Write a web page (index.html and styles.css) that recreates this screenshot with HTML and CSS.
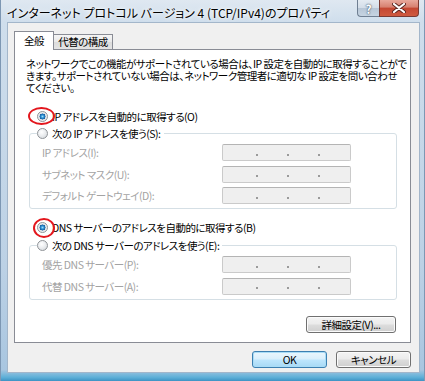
FILE: index.html
```html
<!DOCTYPE html>
<html lang="ja">
<head>
  <meta charset="UTF-8" />
  <title>インターネット プロトコル バージョン 4 (TCP/IPv4)のプロパティ</title>
  <link rel="stylesheet" href="styles.css">
</head>
<body>
  <div class="window">
    <div class="titlebar">
      <span class="title">インターネット プロトコル バージョン 4 (TCP/IPv4)のプロパティ</span>
      <div class="caption-buttons">
        <span class="cap-btn help">?</span>
        <span class="cap-btn close">
          <svg width="14" height="10" viewBox="0 0 14 10">
            <path d="M2 1 L12 9 M12 1 L2 9" stroke="#5a2620" stroke-width="4" stroke-linecap="round"/>
            <path d="M2 1 L12 9 M12 1 L2 9" stroke="#fff" stroke-width="2.2" stroke-linecap="round"/>
          </svg>
        </span>
      </div>
    </div>

    <div class="client">
      <div class="tabs">
        <span class="tab active">全般</span>
        <span class="tab">代替の構成</span>
      </div>

      <div class="panel">
        <p class="desc">ネットワークでこの機能がサポートされている場合は、IP 設定を自動的に取得することがで<br>きます。サポートされていない場合は、ネットワーク管理者に適切な IP 設定を問い合わせ<br>てください。</p>

        <div class="radio-row">
          <span class="radio checked"></span>
          <span>IP アドレスを自動的に取得する(O)</span>
          <span class="mark mark-ip"></span>
        </div>
        <fieldset class="group">
          <legend><span class="radio"></span>次の IP アドレスを使う(S):</legend>
          <div class="fields">
            <span class="label">IP アドレス(I):</span>
            <span class="ip-box"><i></i><i></i><i></i></span>
            <span class="label">サブネット マスク(U):</span>
            <span class="ip-box"><i></i><i></i><i></i></span>
            <span class="label">デフォルト ゲートウェイ(D):</span>
            <span class="ip-box"><i></i><i></i><i></i></span>
          </div>
        </fieldset>

        <div class="radio-row dns">
          <span class="radio checked"></span>
          <span>DNS サーバーのアドレスを自動的に取得する(B)</span>
          <span class="mark mark-dns"></span>
        </div>
        <fieldset class="group">
          <legend><span class="radio"></span>次の DNS サーバーのアドレスを使う(E):</legend>
          <div class="fields">
            <span class="label">優先 DNS サーバー(P):</span>
            <span class="ip-box"><i></i><i></i><i></i></span>
            <span class="label">代替 DNS サーバー(A):</span>
            <span class="ip-box"><i></i><i></i><i></i></span>
          </div>
        </fieldset>

        <div class="advanced-row">
          <button class="btn advanced">詳細設定(V)...</button>
        </div>
      </div>

      <div class="footer">
        <button class="btn default">OK</button>
        <button class="btn">キャンセル</button>
      </div>
    </div>
  </div>
</body>
</html>
```

FILE: styles.css
```css
:root {
  --borda-painel: #898c95;
  --borda-grupo: #d5dfe5;
  --cinza-cliente: #f0f0f0;
  --texto-desativado: #a3a3a3;
  --vermelho: #e3161d;
}

* {
  box-sizing: border-box;
  margin: 0;
  padding: 0;
}

body {
  font-family: "Noto Sans CJK JP", sans-serif;
  font-size: 10.5px;
  letter-spacing: -0.5px;
  font-feature-settings: "palt";
  color: #000;
  background: #fff;
}

.window {
  width: 425px;
  height: 381px;
  display: flex;
  flex-direction: column;
  padding: 0 5px 8px 7px;
  background: linear-gradient(180deg, #dfe8f1 0, #cfdeec 22px, #bcd1e5 70%, #a9c6e0 97%, #5fb0d8 99%, #3d93c4 100%);
  box-shadow: inset 1px 0 0 #7d97b3, inset -1px 0 0 #7d97b3;
}

/* barra de titulo */
.titlebar {
  height: 22px;
  display: flex;
  justify-content: space-between;
  align-items: flex-start;
}

.title {
  font-size: 12px;
  letter-spacing: 0;
  line-height: 16px;
  padding-top: 5px;
  text-shadow: 0 0 6px #fff, 0 0 3px #fff;
  white-space: nowrap;
}

.caption-buttons {
  display: flex;
  margin-right: 1px;
}

.cap-btn {
  height: 17px;
  display: flex;
  align-items: center;
  justify-content: center;
  border: 1px solid #6f7f92;
  border-top: none;
}

.help {
  width: 22px;
  border-right: none;
  border-radius: 0 0 0 4px;
  background: linear-gradient(180deg, #e4ebf2 0, #d3dde8 50%, #b7c6d6 51%, #c6d4e2 100%);
  color: #fff;
  font-size: 12px;
  font-weight: bold;
  letter-spacing: 0;
  text-shadow: 0 0 2px #44566a, 0 0 1px #44566a;
}

.close {
  width: 40px;
  border-radius: 0 0 4px 0;
  border-color: #7a3a33;
  background: linear-gradient(180deg, #e9a99c 0, #d7806f 45%, #c44732 50%, #cf5a3f 100%);
}

/* area cliente */
.client {
  flex: 1;
  display: flex;
  flex-direction: column;
  background: var(--cinza-cliente);
  border: 1px solid #a3b6ca;
  padding: 8px 8px 4px 6px;
}

.tabs {
  display: flex;
  align-items: flex-end;
  position: relative;
  z-index: 1;
}

.tab {
  width: 59px;
  height: 15px;
  margin-bottom: 1px;
  line-height: 14px;
  text-align: center;
  border: 1px solid var(--borda-painel);
  border-bottom: none;
  border-left: none;
  background: linear-gradient(180deg, #f5f5f5 0, #e9e9e9 50%, #dcdcdc 51%, #e4e4e4 100%);
}

.tab.active {
  width: 40px;
  height: 19px;
  margin-bottom: 0;
  padding-top: 2px;
  border-left: 1px solid var(--borda-painel);
  border-right: 1px solid var(--borda-painel);
  background: #fff;
}

.panel {
  flex: 1;
  margin-top: -1px;
  background: #fff;
  border: 1px solid var(--borda-painel);
  padding: 8px 13px 0 11px;
}

.desc {
  line-height: 12px;
  white-space: nowrap;
}

/* radios */
.radio-row {
  position: relative;
  display: flex;
  align-items: center;
  gap: 4px;
  height: 16px;
  margin: 14px 0 0 11px;
}

.radio-row.dns {
  margin-top: 10px;
}

.radio {
  width: 11px;
  height: 11px;
  flex: none;
  border-radius: 50%;
  border: 1px solid #8f9397;
  background: radial-gradient(circle at 40% 35%, #ffffff 0, #eef0f2 40%, #cfd3d7 100%);
}

.radio.checked {
  background: radial-gradient(circle, #9fdcf8 0, #2a8fd3 1.6px, #145a9c 2.8px, #dfe3e7 3.2px, #f5f6f7 5px);
}

.mark {
  position: absolute;
  border: 2px solid var(--vermelho);
  border-radius: 50%;
}

.mark-ip {
  left: -9px;
  top: -1px;
  width: 27px;
  height: 18px;
}

.mark-dns {
  left: -4px;
  top: -1px;
  width: 22px;
  height: 20px;
}

/* grupos */
.group {
  margin: 1px 0 0 3px;
  border: 1px solid var(--borda-grupo);
  border-radius: 3px;
  padding: 0;
  min-width: 0;
}

.group legend {
  display: flex;
  align-items: center;
  gap: 4px;
  height: 16px;
  margin-left: 7px;
  padding-right: 3px;
}

.radio-row.dns + .group {
  margin-top: 2px;
}

.fields {
  display: grid;
  grid-template-columns: 180px 129px;
  row-gap: 4.5px;
  align-items: center;
  padding: 3px 0 4px 12px;
}

.label {
  color: var(--texto-desativado);
  white-space: nowrap;
}

.ip-box {
  height: 17px;
  display: flex;
  align-items: center;
  gap: 29px;
  padding: 4px 0 0 33px;
  background: #efefef;
  border: 1px solid #cacaca;
  border-top-color: #b4b4b4;
  border-radius: 2px;
}

.ip-box i {
  width: 2px;
  height: 2px;
  background: #9a9a9a;
}

/* botoes */
.advanced-row {
  display: flex;
  justify-content: flex-end;
  margin: 16px 1px 0 0;
}

.btn {
  height: 17px;
  font-family: inherit;
  font-size: 10.5px;
  letter-spacing: -0.5px;
  font-feature-settings: "palt";
  color: #000;
  border: 1px solid #707070;
  border-radius: 3px;
  background: linear-gradient(180deg, #f4f4f4 0, #ebebeb 48%, #dddddd 52%, #cfcfcf 100%);
  box-shadow: inset 0 0 0 1px #fbfbfb;
}

.advanced {
  width: 90px;
}

.footer {
  display: flex;
  justify-content: flex-end;
  gap: 9px;
  margin-top: 8px;
}

.footer .btn {
  width: 75px;
}

.btn.default {
  border-color: #3c7fb1;
  box-shadow: inset 0 0 0 1px #a9dcf6;
  background: linear-gradient(180deg, #eaf6fd 0, #d9effc 48%, #bee6fd 52%, #a7d9f5 100%);
}
```
